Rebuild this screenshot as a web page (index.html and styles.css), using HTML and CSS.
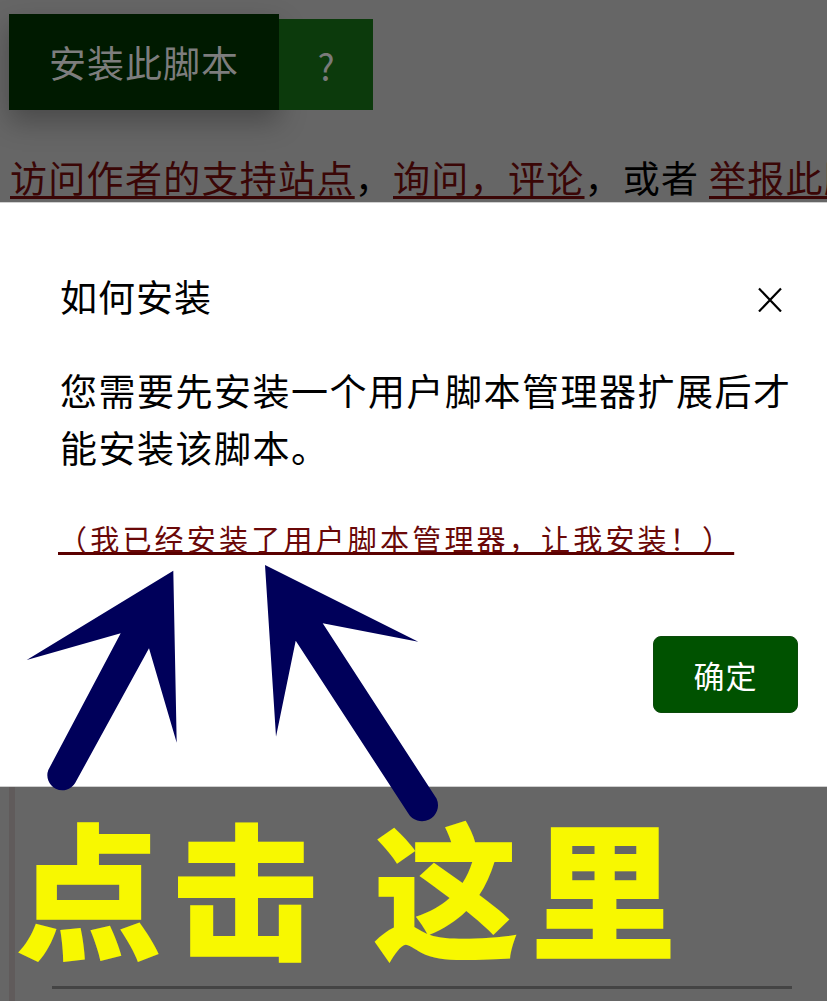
FILE: index.html
```html
<!DOCTYPE html>
<html lang="zh-CN">
<head>
<meta charset="utf-8">
<title>如何安装</title>
<link rel="stylesheet" href="styles.css">
</head>
<body>
<div class="page">
  <section class="top">
    <div class="install-row">
      <a class="install">安装此脚本</a>
      <a class="help">?</a>
    </div>
    <p class="links"><a class="lk">访问作者的支持站点</a>，<a class="lk">询问，评论</a>，或者 <a class="lk">举报此脚本</a>。</p>
  </section>

  <section class="modal">
    <div class="modal-head">
      <h2 class="modal-title">如何安装</h2>
      <span class="close">
        <svg viewBox="0 0 24 24" width="24" height="25"><path d="M1 1 L23 24 M23 1 L1 24" stroke="#000" stroke-width="2.2" fill="none"/></svg>
      </span>
    </div>
    <p class="modal-text">您需要先安装一个用户脚本管理器扩展后才能安装该脚本。</p>
    <p class="modal-link"><a class="already">（我已经安装了用户脚本管理器，让我安装！）</a></p>
    <div class="modal-foot">
      <button class="ok">确定</button>
    </div>
  </section>

  <section class="bottom">
    <div class="callout">点击 这里</div>
    <div class="rule"></div>
  </section>

  <svg class="arrows" viewBox="0 0 827 1001" width="827" height="1001">
    <path d="M173.3 570.7 L26.7 660 L120.7 633.3 L48.3 770 A15 15 0 0 0 75 783.3 L149 648.3 L176.7 742.7 Z" fill="#00005a"/>
    <path d="M265 565 L418.3 641.7 L322.7 623.3 L436.5 798.5 A16 16 0 0 1 408 813 L295.7 640.7 L276 736.7 Z" fill="#00005a"/>
  </svg>
</div>
</body>
</html>
```

FILE: styles.css
```css
html, body {
  margin: 0;
  padding: 0;
}
body {
  background: #666666;
  font-family: "Noto Sans CJK SC", "Noto Sans", sans-serif;
  color: #000;
}
.page {
  position: relative;
  width: 827px;
  height: 1001px;
  overflow: hidden;
}
.top {
  height: 202px;
  padding: 14px 0 0 9px;
  box-sizing: border-box;
  display: flex;
  flex-direction: column;
}
.install-row {
  display: flex;
  align-items: flex-end;
}
.install {
  width: 270px;
  height: 96px;
  background: #001a00;
  color: #7d7d7d;
  font-size: 37px;
  letter-spacing: 1px;
  display: flex;
  align-items: center;
  justify-content: center;
  box-shadow: 0 12px 26px rgba(0, 0, 0, 0.28);
}
.help {
  width: 94px;
  height: 91px;
  background: #0c3a0c;
  color: #7a7a7a;
  font-size: 36px;
  display: flex;
  align-items: center;
  justify-content: center;
}
.links {
  margin: 44px 0 0 1px;
  font-size: 37px;
  letter-spacing: 1.3px;
  line-height: 46px;
  white-space: nowrap;
  color: #000;
}
.lk {
  color: #3a0606;
  text-decoration: underline;
  text-decoration-thickness: 3px;
  text-underline-offset: 3px;
}
.modal {
  height: 585px;
  background: #fff;
  border-top: 1px solid #cfcfcf;
  border-bottom: 1px solid #cfcfcf;
  box-sizing: border-box;
  padding: 67px 29px 0 60px;
  display: flex;
  flex-direction: column;
}
.modal-head {
  display: flex;
  align-items: center;
  justify-content: space-between;
  height: 52px;
}
.modal-title {
  margin: 0;
  font-size: 37px;
  font-weight: 400;
  letter-spacing: 1px;
  line-height: 52px;
}
.close {
  width: 24px;
  height: 25px;
  margin: 6px 16px 0 0;
  display: flex;
}
.modal-text {
  margin: 40px 0 0 0;
  font-size: 37px;
  letter-spacing: 1.5px;
  line-height: 57px;
}
.modal-link {
  margin: 42px 0 0 -2px;
  font-size: 29px;
  line-height: 40px;
  letter-spacing: 3.2px;
}
.already {
  color: #6a0808;
  text-decoration: underline;
  text-decoration-color: #5a0000;
  text-decoration-thickness: 3px;
  text-underline-offset: 1px;
}
.modal-foot {
  display: flex;
  justify-content: flex-end;
  margin-top: 78px;
}
.ok {
  width: 145px;
  height: 77px;
  background: #005200;
  border: 1px solid #0b4a0b;
  border-radius: 8px;
  color: #fff;
  font-family: "Noto Sans CJK SC", "Noto Sans", sans-serif;
  font-size: 31px;
  letter-spacing: 1px;
  padding: 0;
}
.bottom {
  height: 214px;
  box-sizing: border-box;
  margin-left: 9px;
  border-left: 6px solid #605b5b;
  padding-top: 23px;
  display: flex;
  flex-direction: column;
}
.callout {
  font-size: 147px;
  font-weight: 900;
  line-height: 147px;
  letter-spacing: 10px;
  color: #f8f800;
  white-space: nowrap;
}
.rule {
  margin: 29px 0 0 37px;
  width: 740px;
  height: 3px;
  background: #444;
}
.arrows {
  position: absolute;
  left: 0;
  top: 0;
  pointer-events: none;
}
```
